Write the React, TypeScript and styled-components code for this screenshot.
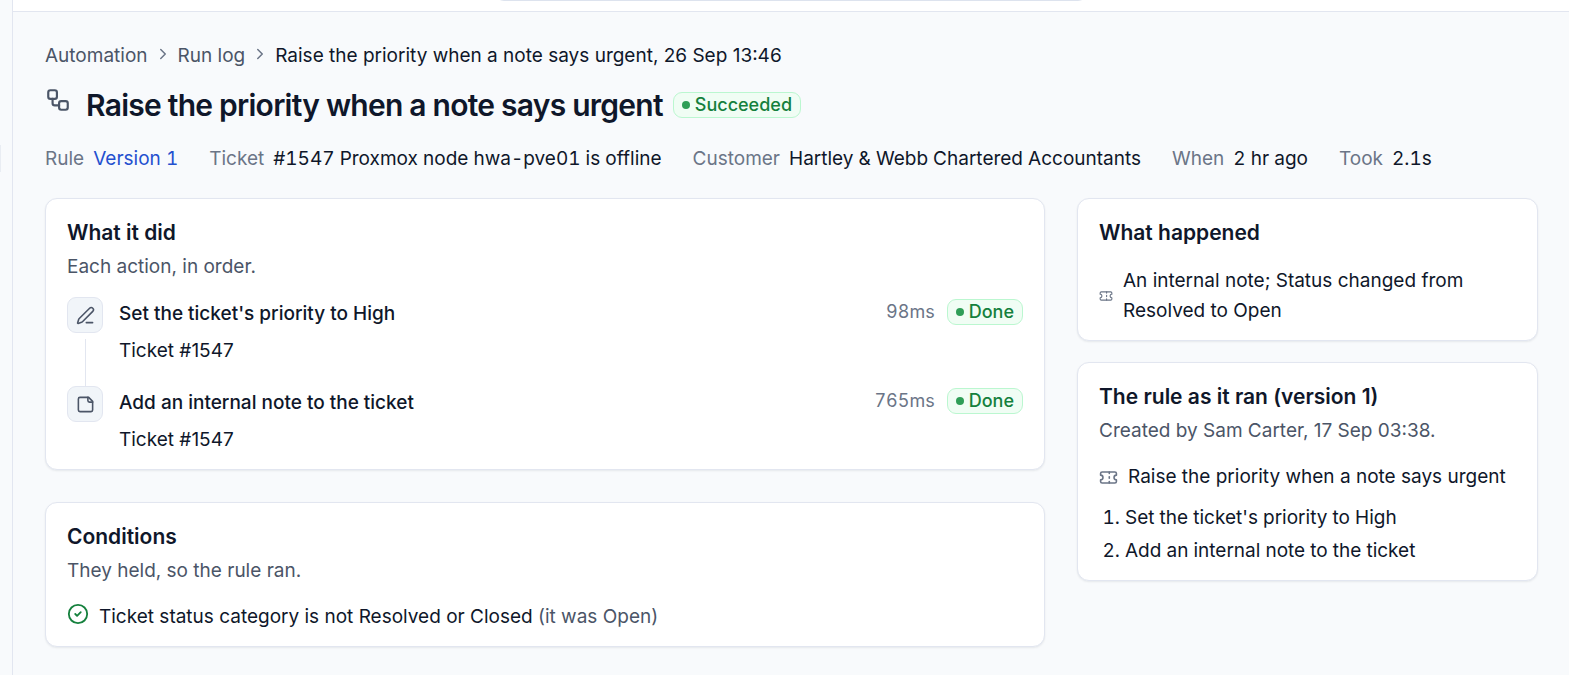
import React from "react";
import styled, { createGlobalStyle } from "styled-components";
import { ChevronRight, Workflow, PenLine, Ticket, CircleCheck } from "lucide-react";

const color = {
  ink: "#0f172a",
  soft: "#4b5567",
  faint: "#6b7587",
  line: "#e2e6f0",
  page: "#f8fafc",
  link: "#2450cf",
  green: "#15803d",
};

const GlobalStyle = createGlobalStyle`
  *, *::before, *::after { box-sizing: border-box; }
  body {
    margin: 0;
    background: ${color.page};
    color: ${color.ink};
    font: 400 19px/30px Inter, sans-serif;
  }
  h1, h2, p, ol, ul, dl, dd { margin: 0; padding: 0; }
  a { text-decoration: none; }
`;

const Shell = styled.div`
  display: grid;
  grid-template-columns: 13px minmax(0, 1fr);
  min-height: 100vh;
`;

const Sidebar = styled.aside`
  border-right: 1px solid ${color.line};
  padding-top: 145px;
`;

const NavEdge = styled.div`
  width: 1px;
  height: 27px;
  background: #e9edf3;
`;

const TopBar = styled.header`
  display: flex;
  align-items: flex-end;
  justify-content: center;
  height: 12px;
  padding-bottom: 10px;
  background: #ffffff;
  border-bottom: 1px solid ${color.line};
`;

const Search = styled.input`
  flex: 0 0 auto;
  width: 38%;
  height: 48px;
  border: 1px solid #dde3ee;
  border-radius: 9px;
  background: #ffffff;
`;

const Content = styled.main`
  padding: 29px 31px 27px 32px;
`;

const Crumbs = styled.nav`
  display: flex;
  align-items: center;
  gap: 6px;
  color: ${color.ink};

  a { color: ${color.soft}; }
  svg { color: ${color.faint}; margin-bottom: 4px; }
`;

const TitleRow = styled.div`
  display: flex;
  align-items: center;
  gap: 10px;
  margin-top: 14px;
`;

const TitleIcon = styled.span`
  display: flex;
  width: 31px;
  padding-bottom: 10px;
  color: ${color.soft};
`;

const Title = styled.h1`
  font-size: 30px;
  line-height: 40px;
  font-weight: 600;
  letter-spacing: -0.025em;
`;

const Pill = styled.span`
  display: inline-flex;
  align-items: center;
  gap: 5px;
  height: 26px;
  padding: 0 8px;
  border: 1px solid #bbf7d0;
  border-radius: 9px;
  background: #f0fdf4;
  color: ${color.green};
  font-size: 18px;
  line-height: 24px;
  font-weight: 500;

  &::before {
    content: "";
    width: 8px;
    height: 8px;
    border-radius: 50%;
    background: #2f9e57;
  }
`;

const Facts = styled.dl`
  display: flex;
  flex-wrap: wrap;
  column-gap: 31px;
  margin-top: 19px;
  font-variant-numeric: tabular-nums;

  div { display: flex; gap: 9px; }
  dt { color: ${color.faint}; }
  a { color: ${color.link}; }
`;

const Columns = styled.div`
  display: grid;
  grid-template-columns: minmax(0, 1fr) 461px;
  gap: 32px;
  align-items: start;
  margin-top: 24px;
`;

const Stack = styled.div<{ $gap: number }>`
  display: grid;
  gap: ${(p) => p.$gap}px;
`;

const Card = styled.section`
  padding: 19px 21px 14px;
  background: #ffffff;
  border: 1px solid ${color.line};
  border-radius: 12px;
  box-shadow: 0 1px 2px rgba(15, 23, 42, 0.08);
`;

const CardTitle = styled.h2`
  font-size: 21px;
  line-height: 30px;
  font-weight: 600;
`;

const CardNote = styled.p`
  margin-top: 4px;
  color: ${color.soft};
`;

const Steps = styled.ol`
  display: grid;
  gap: 20px;
  margin-top: 15px;
  list-style: none;
`;

const Step = styled.li`
  display: grid;
  grid-template-columns: 36px minmax(0, 1fr) auto;
  column-gap: 16px;
`;

const Rail = styled.div`
  display: flex;
  flex-direction: column;
  align-items: center;
  gap: 6px;
`;

const StepIcon = styled.span`
  display: grid;
  place-items: center;
  width: 36px;
  height: 36px;
  border: 1px solid ${color.line};
  border-radius: 9px;
  background: #f1f5f9;
  color: ${color.soft};
`;

const Connector = styled.span`
  flex: 1;
  width: 1px;
  margin-bottom: -20px;
  background: ${color.line};
`;

const StepBody = styled.div`
  padding-top: 2px;

  p + p { margin-top: 7px; }
`;

const StepName = styled.p`
  font-weight: 500;
`;

const StepResult = styled.div`
  display: flex;
  align-items: center;
  gap: 12px;
  height: 30px;
  color: ${color.faint};
  font-size: 18px;
  font-variant-numeric: tabular-nums;
`;

const IconLine = styled.p<{ $color?: string }>`
  display: flex;
  align-items: center;
  gap: 10px;
  margin-top: 16px;

  svg { flex: none; color: ${(p) => p.$color ?? color.faint}; }
`;

const EventLine = styled(IconLine)`
  margin-top: 18px;
`;

const Condition = styled(IconLine)`
  svg { margin-bottom: 6px; }
`;

const Muted = styled.span`
  color: ${color.soft};
`;

const RuleSteps = styled.ol`
  margin-top: 11px;
  padding-left: 26px;
  font-variant-numeric: tabular-nums;

  li + li { margin-top: 3px; }
`;

const NoteIcon = () => (
  <svg width="19" height="19" viewBox="0 0 24 24" fill="none" stroke="currentColor" strokeWidth="2" strokeLinecap="round" strokeLinejoin="round">
    <path d="M16 3H5a2 2 0 0 0-2 2v14a2 2 0 0 0 2 2h14a2 2 0 0 0 2-2V8Z" />
    <path d="M15 3v4a2 2 0 0 0 2 2h4" />
  </svg>
);

const steps = [
  { name: "Set the ticket's priority to High", time: "98ms", icon: <PenLine size={19} strokeWidth={2} /> },
  { name: "Add an internal note to the ticket", time: "765ms", icon: <NoteIcon /> },
];

export default function App() {
  return (
    <>
      <GlobalStyle />
      <Shell>
        <Sidebar>
          <NavEdge />
        </Sidebar>
        <div>
          <TopBar>
            <Search type="search" aria-label="Search" />
          </TopBar>
          <Content>
            <Crumbs aria-label="Breadcrumb">
              <a href="#automation">Automation</a>
              <ChevronRight size={18} strokeWidth={2} />
              <a href="#run-log">Run log</a>
              <ChevronRight size={18} strokeWidth={2} />
              <span>Raise the priority when a note says urgent, 26 Sep 13:46</span>
            </Crumbs>
            <TitleRow>
              <TitleIcon>
                <Workflow size={26} strokeWidth={2} />
              </TitleIcon>
              <Title>Raise the priority when a note says urgent</Title>
              <Pill>Succeeded</Pill>
            </TitleRow>
            <Facts>
              <div><dt>Rule</dt><dd><a href="#version-1">Version 1</a></dd></div>
              <div><dt>Ticket</dt><dd>#1547 Proxmox node hwa-pve01 is offline</dd></div>
              <div><dt>Customer</dt><dd>Hartley &amp; Webb Chartered Accountants</dd></div>
              <div><dt>When</dt><dd>2 hr ago</dd></div>
              <div><dt>Took</dt><dd>2.1s</dd></div>
            </Facts>
            <Columns>
              <Stack $gap={32}>
                <Card>
                  <CardTitle>What it did</CardTitle>
                  <CardNote>Each action, in order.</CardNote>
                  <Steps>
                    {steps.map((step, i) => (
                      <Step key={step.name}>
                        <Rail>
                          <StepIcon>{step.icon}</StepIcon>
                          {i < steps.length - 1 && <Connector />}
                        </Rail>
                        <StepBody>
                          <StepName>{step.name}</StepName>
                          <p>Ticket #1547</p>
                        </StepBody>
                        <StepResult>
                          {step.time}
                          <Pill>Done</Pill>
                        </StepResult>
                      </Step>
                    ))}
                  </Steps>
                </Card>
                <Card>
                  <CardTitle>Conditions</CardTitle>
                  <CardNote>They held, so the rule ran.</CardNote>
                  <Condition $color={color.green}>
                    <CircleCheck size={22} strokeWidth={2} />
                    <span>
                      Ticket status category is not Resolved or Closed <Muted>(it was Open)</Muted>
                    </span>
                  </Condition>
                </Card>
              </Stack>
              <Stack $gap={21}>
                <Card>
                  <CardTitle>What happened</CardTitle>
                  <EventLine>
                    <Ticket size={14} strokeWidth={2} />
                    <span>An internal note; Status changed from Resolved to Open</span>
                  </EventLine>
                </Card>
                <Card>
                  <CardTitle>The rule as it ran (version 1)</CardTitle>
                  <CardNote>Created by Sam Carter, 17 Sep 03:38.</CardNote>
                  <IconLine>
                    <Ticket size={19} strokeWidth={2} />
                    <span>Raise the priority when a note says urgent</span>
                  </IconLine>
                  <RuleSteps>
                    {steps.map((step) => (
                      <li key={step.name}>{step.name}</li>
                    ))}
                  </RuleSteps>
                </Card>
              </Stack>
            </Columns>
          </Content>
        </div>
      </Shell>
    </>
  );
}
